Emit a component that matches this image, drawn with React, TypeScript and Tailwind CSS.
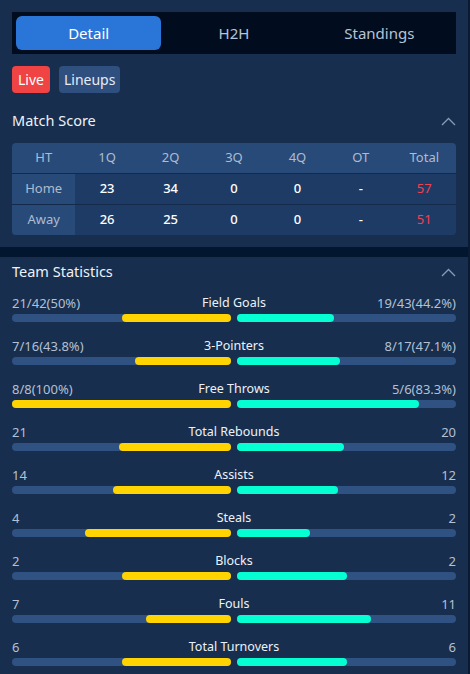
// Match detail panel: tabs, quarter scores and team statistics

const quarters = ['HT', '1Q', '2Q', '3Q', '4Q', 'OT', 'Total'];

const scoreRows = [
  { team: 'Home', values: ['23', '34', '0', '0', '-'], total: '57' },
  { team: 'Away', values: ['26', '25', '0', '0', '-'], total: '51' },
];

type Stat = { name: string; home: string; away: string; hp: number; ap: number };

const stats: Stat[] = [
  { name: 'Field Goals', home: '21/42(50%)', away: '19/43(44.2%)', hp: 50, ap: 44.2 },
  { name: '3-Pointers', home: '7/16(43.8%)', away: '8/17(47.1%)', hp: 43.8, ap: 47.1 },
  { name: 'Free Throws', home: '8/8(100%)', away: '5/6(83.3%)', hp: 100, ap: 83.3 },
  { name: 'Total Rebounds', home: '21', away: '20', hp: 51.2, ap: 48.8 },
  { name: 'Assists', home: '14', away: '12', hp: 53.8, ap: 46.2 },
  { name: 'Steals', home: '4', away: '2', hp: 66.7, ap: 33.3 },
  { name: 'Blocks', home: '2', away: '2', hp: 50, ap: 50 },
  { name: 'Fouls', home: '7', away: '11', hp: 38.9, ap: 61.1 },
  { name: 'Total Turnovers', home: '6', away: '6', hp: 50, ap: 50 },
];

function ChevronUp() {
  return (
    <svg width="15" height="9" viewBox="0 0 15 9" fill="none">
      <path d="M1 8L7.5 1.5L14 8" stroke="#8a9bb5" strokeWidth="1.3" />
    </svg>
  );
}

function SectionHeader({ title }: { title: string }) {
  return (
    <div className="flex items-center justify-between h-[26px]">
      <span className="text-[14.5px] text-[#eef2f8]">{title}</span>
      <ChevronUp />
    </div>
  );
}

function StatRow({ stat }: { stat: Stat }) {
  return (
    <div className="h-[43px]">
      <div className="flex items-center justify-between h-[16px] text-[13px] leading-[16px]">
        <span className="w-[120px] text-[#b4c0d3]">{stat.home}</span>
        <span className="text-[12.5px] text-[#eef2f8]">{stat.name}</span>
        <span className="w-[120px] text-right text-[#b4c0d3]">{stat.away}</span>
      </div>
      <div className="flex gap-[6px] mt-[3px]">
        <div className="flex-1 h-[8px] rounded-full bg-[#2f5283] flex justify-end">
          <div className="h-full rounded-full bg-[#ffd400]" style={{ width: `${stat.hp}%` }} />
        </div>
        <div className="flex-1 h-[8px] rounded-full bg-[#2f5283]">
          <div className="h-full rounded-full bg-[#05ffd2]" style={{ width: `${stat.ap}%` }} />
        </div>
      </div>
    </div>
  );
}

export default function App() {
  return (
    <div
      className="w-[470px] h-[674px] flex overflow-hidden"
      style={{ fontFamily: '"Noto Sans", "Open Sans", sans-serif' }}
    >
      <div className="w-[468px] bg-[#172e4e]">
        {/* Tabs */}
        <div className="mx-3 pt-3">
          <div className="h-[42px] bg-[#010d1f] p-1 grid grid-cols-3">
            <div className="rounded-md bg-[#2a76d8] flex items-center justify-center text-[15px] text-white">
              Detail
            </div>
            <div className="flex items-center justify-center text-[15px] text-[#b7c3d6]">H2H</div>
            <div className="flex items-center justify-center text-[15px] text-[#b7c3d6]">Standings</div>
          </div>
        </div>

        {/* Badges */}
        <div className="mx-3 mt-3 flex gap-[9px]">
          <span className="h-[27px] px-[6px] rounded bg-[#f04444] text-white text-[14px] flex items-center">
            Live
          </span>
          <span className="h-[27px] px-[5px] rounded bg-[#2f4f7f] text-[#e6ecf5] text-[14px] flex items-center">
            Lineups
          </span>
        </div>

        {/* Match score */}
        <div className="px-3 mt-[15px]">
          <SectionHeader title="Match Score" />
          <div className="mt-[9px] rounded overflow-hidden text-[13px]">
            <div className="grid grid-cols-7 h-[30px] bg-[#284a79] text-[#aebcd0]">
              {quarters.map((q) => (
                <div key={q} className="flex items-center justify-center">{q}</div>
              ))}
            </div>
            {scoreRows.map((row) => (
              <div key={row.team} className="grid grid-cols-7 h-[31px] border-t border-[#132a4a] bg-[#1e3b66]">
                <div className="flex items-center justify-center bg-[#284a79] text-[#aebcd0]">{row.team}</div>
                {row.values.map((v, i) => (
                  <div key={i} className="flex items-center justify-center text-white font-medium">{v}</div>
                ))}
                <div className="flex items-center justify-center text-[#f0424f]">{row.total}</div>
              </div>
            ))}
          </div>
        </div>

        {/* Divider */}
        <div className="mt-[12px] h-[10px] bg-[#031630]" />

        {/* Team statistics */}
        <div className="px-3 mt-[2px]">
          <SectionHeader title="Team Statistics" />
          <div className="mt-[10px]">
            {stats.map((s) => (
              <StatRow key={s.name} stat={s} />
            ))}
          </div>
        </div>
      </div>
      <div className="w-[2px] bg-[#0a1a33]" />
    </div>
  );
}
